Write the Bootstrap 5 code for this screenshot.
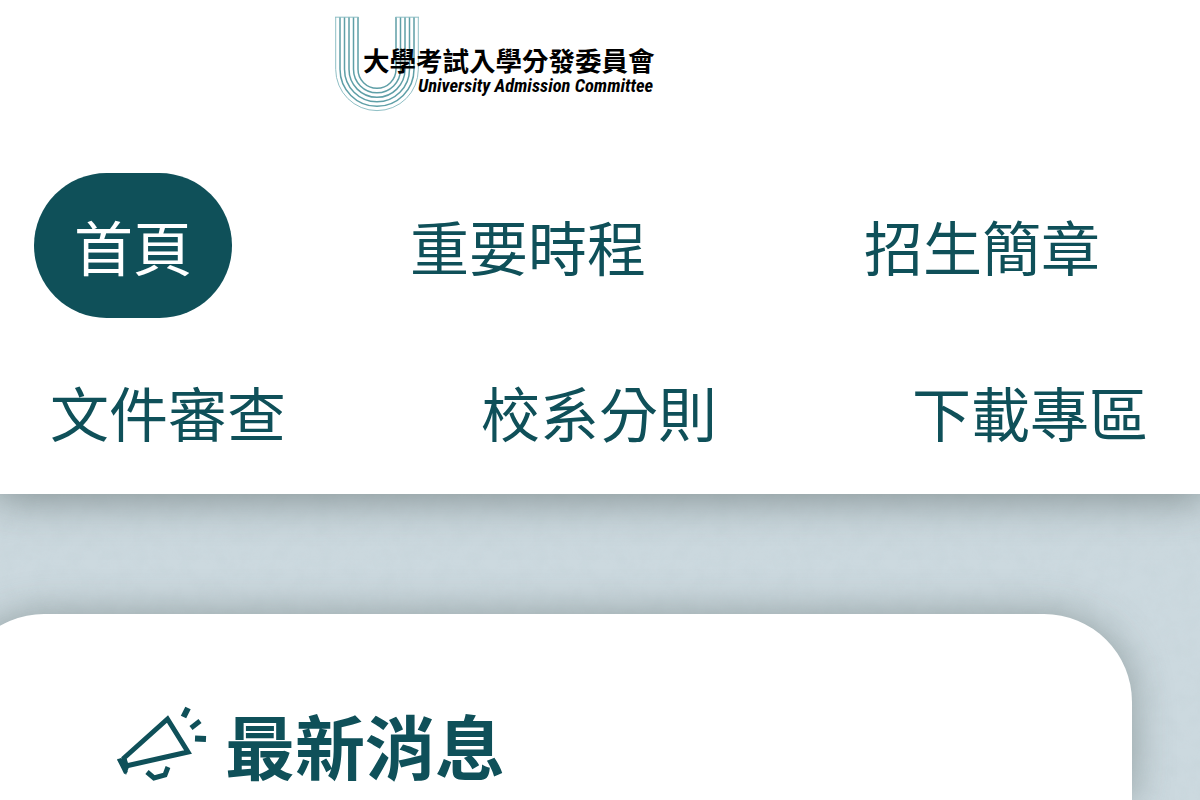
<!DOCTYPE html>
<html lang="zh-Hant">
<head>
<meta charset="utf-8">
<meta name="viewport" content="width=device-width, initial-scale=1">
<title>大學考試入學分發委員會</title>
<link href="https://cdn.jsdelivr.net/npm/bootstrap@5.3.0/dist/css/bootstrap.min.css" rel="stylesheet">
<style>
:root { --teal: #0f5059; }
body { font-family: "Noto Sans CJK TC", sans-serif; background: #fff; overflow: hidden; }
.page-wrap { height: 100vh; }
.site-head { box-shadow: 0 0 40px 6px rgba(60, 74, 72, .5); z-index: 1; padding-bottom: 10px; }
.brand-bar { padding: 16px 0 0 332px; height: 173px; }
.brand-link { width: 328px; }
.brand-link svg { width: 100%; height: auto; }
.logo-zh { font: 700 53px "Noto Sans CJK TC", sans-serif; }
.logo-en { font: italic 700 37px "Liberation Sans Narrow", "Roboto Condensed", "Liberation Sans", sans-serif; }
.menu-row { margin-bottom: 21px; }
.menu-row:last-child { margin-bottom: 0; }
.row-top { padding: 0 60px 0 34px; }
.row-bottom { padding: 0 12px 0 10px; }
.menu-row .nav-link { color: var(--teal); font-size: 59px; line-height: 89px; padding: 28px 40px; border-radius: 73px; white-space: nowrap; }
.menu-row .nav-link.active { background: var(--teal); color: #fff; }
.paper {
  padding: 120px 68px 0 0;
  background-color: #ccd9df;
  background-image: url("data:image/svg+xml,%3Csvg xmlns='http://www.w3.org/2000/svg' width='400' height='400'%3E%3Cfilter id='n'%3E%3CfeTurbulence type='fractalNoise' baseFrequency='.06' numOctaves='3' stitchTiles='stitch'/%3E%3CfeColorMatrix values='0 0 0 0 .4 0 0 0 0 .5 0 0 0 0 .52 .15 0 0 0 -.05'/%3E%3C/filter%3E%3Crect width='400' height='400' filter='url(%23n)'/%3E%3C/svg%3E");
}
.news-panel { margin-left: -44px; padding: 82px 44px 0 160px; border-radius: 88px 88px 0 0; box-shadow: 0 0 40px rgba(60, 74, 70, .42); }
.news-title { color: var(--teal); font-size: 70px; line-height: 98px; gap: 15px; }
</style>
</head>
<body>
<div class="page-wrap d-flex flex-column">
  <header class="site-head position-relative bg-white">
    <div class="brand-bar">
      <a class="brand-link d-block" href="#" aria-label="大學考試入學分發委員會">
        <svg class="d-block" viewBox="0 0 656 200">
          <g fill="none" stroke="#5f9fa7" stroke-width="1.5" transform="scale(2)">
            <path d="M3.7 1V53.3a41.3 41.3 0 0 0 82.6 0V1" stroke="#8fbfc5" stroke-width="1"/>
            <path d="M8 1V53.3a37 37 0 0 0 74 0V1"/>
            <path d="M12.5 1V53.3a32.5 32.5 0 0 0 65 0V1"/>
            <path d="M17 1V53.3a28 28 0 0 0 56 0V1"/>
            <path d="M21.5 1V53.3a23.5 23.5 0 0 0 47 0V1"/>
            <path d="M26 1V53.3a19 19 0 0 0 38 0V1"/>
            <path d="M3 1.2H26.5M63.5 1.2H87" stroke="#8fbfc5" stroke-width="1"/>
          </g>
          <text class="logo-zh" x="62" y="110">大學考試入學分發委員會</text>
          <text class="logo-en" x="172" y="152">University Admission Committee</text>
        </svg>
      </a>
    </div>
    <nav aria-label="主選單">
      <ul class="nav menu-row row-top flex-nowrap justify-content-between">
        <li class="nav-item"><a class="nav-link active" href="#" aria-current="page">首頁</a></li>
        <li class="nav-item"><a class="nav-link" href="#">重要時程</a></li>
        <li class="nav-item"><a class="nav-link" href="#">招生簡章</a></li>
      </ul>
      <ul class="nav menu-row row-bottom flex-nowrap justify-content-between">
        <li class="nav-item"><a class="nav-link" href="#">文件審查</a></li>
        <li class="nav-item"><a class="nav-link" href="#">校系分則</a></li>
        <li class="nav-item"><a class="nav-link" href="#">下載專區</a></li>
      </ul>
    </nav>
  </header>
  <main class="paper flex-grow-1 d-flex flex-column">
    <section class="news-panel bg-white flex-grow-1">
      <h2 class="news-title d-flex align-items-center fw-bold mb-0">
        <svg class="flex-shrink-0" width="94" height="90" viewBox="0 0 94 90" aria-hidden="true">
          <g fill="none" stroke="#0f5059" stroke-width="5">
            <path d="M8 58 51.500 19 72 52 10 66Z"/>
            <path d="M3 59 10 73" stroke-width="4"/>
            <path d="M31 72 38 78 49 75 52 67"/>
            <path d="M67.500 17 72 8" stroke-width="6"/>
            <path d="M75 28 84 21" stroke-width="5"/>
            <path d="M79 38.500 90 39" stroke-width="6"/>
          </g>
          <path fill="#0f5059" d="M1 59 10 58 13 67 10 75Z"/>
        </svg>
        最新消息
      </h2>
    </section>
  </main>
</div>
<script src="https://cdn.jsdelivr.net/npm/bootstrap@5.3.0/dist/js/bootstrap.bundle.min.js"></script>
</body>
</html>
